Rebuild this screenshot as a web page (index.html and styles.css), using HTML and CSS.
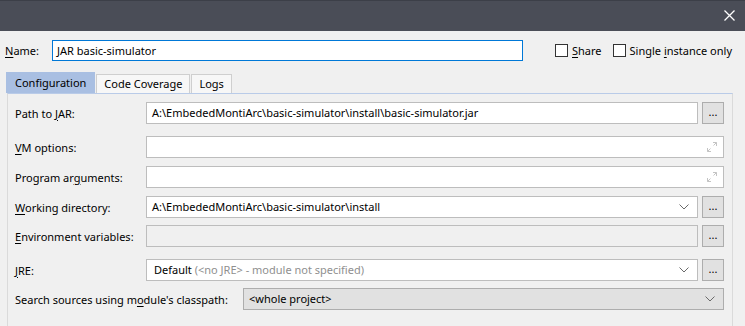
FILE: index.html
```html
<!DOCTYPE html>
<html lang="en">
<head>
  <meta charset="UTF-8">
  <title>Run Configuration</title>
  <link rel="stylesheet" href="styles.css">
</head>
<body>
  <div class="titlebar">
    <svg class="close" width="11" height="11" viewBox="0 0 11 11">
      <path d="M0.5 0.5 L10.5 10.5 M10.5 0.5 L0.5 10.5" stroke="#fff" stroke-width="1.3" fill="none"/>
    </svg>
  </div>

  <div class="name-row">
    <div class="name-label"><u>N</u>ame:</div>
    <div class="name-input">JAR basic-simulator</div>
    <div class="check share"><span class="box"></span><span><u>S</u>hare</span></div>
    <div class="check single"><span class="box"></span><span>Single <u>i</u>nstance only</span></div>
  </div>

  <div class="tabs">
    <div class="tab active">Configuration</div>
    <div class="tab">Code Coverage</div>
    <div class="tab">Logs</div>
  </div>

  <div class="panel">
    <div class="row row-jar">
      <div class="label">Path to <u>J</u>AR:</div>
      <div class="field">A:\EmbededMontiArc\basic-simulator\install\basic-simulator.jar</div>
      <div class="btn">...</div>
    </div>
    <div class="row row-vm">
      <div class="label"><u>V</u>M options:</div>
      <div class="field expand">
        <svg class="expand-icon" width="10" height="10" viewBox="0 0 10 10">
          <path d="M6 0.5 H9.5 V4 M9.5 0.5 L6.5 3.5 M0.5 6 V9.5 H4 M0.5 9.5 L3.5 6.5" stroke="#c4c4c4" fill="none"/>
        </svg>
      </div>
    </div>
    <div class="row row-args">
      <div class="label">Program ar<u>g</u>uments:</div>
      <div class="field expand">
        <svg class="expand-icon" width="10" height="10" viewBox="0 0 10 10">
          <path d="M6 0.5 H9.5 V4 M9.5 0.5 L6.5 3.5 M0.5 6 V9.5 H4 M0.5 9.5 L3.5 6.5" stroke="#c4c4c4" fill="none"/>
        </svg>
      </div>
    </div>
    <div class="row row-dir">
      <div class="label"><u>W</u>orking directory:</div>
      <div class="field combo">
        <span>A:\EmbededMontiArc\basic-simulator\install</span>
        <svg class="chevron" width="10" height="6" viewBox="0 0 10 6"><path d="M0.5 0.5 L5 5 L9.5 0.5" stroke="#6a6a6a" fill="none"/></svg>
      </div>
      <div class="btn">...</div>
    </div>
    <div class="row row-env">
      <div class="label"><u>E</u>nvironment variables:</div>
      <div class="field disabled"></div>
      <div class="btn">...</div>
    </div>
    <div class="row row-jre">
      <div class="label"><u>J</u>RE:</div>
      <div class="field combo jre">
        <span>Default <span class="muted">(&lt;no JRE&gt; - module not specified)</span></span>
        <svg class="chevron" width="10" height="6" viewBox="0 0 10 6"><path d="M0.5 0.5 L5 5 L9.5 0.5" stroke="#6a6a6a" fill="none"/></svg>
      </div>
      <div class="btn">...</div>
    </div>
    <div class="row row-src">
      <div class="label wide">Search sources using m<u>o</u>dule's classpath:</div>
      <div class="field combo grey">
        <span>&lt;whole project&gt;</span>
        <svg class="chevron" width="10" height="6" viewBox="0 0 10 6"><path d="M0.5 0.5 L5 5 L9.5 0.5" stroke="#6a6a6a" fill="none"/></svg>
      </div>
    </div>
  </div>
</body>
</html>
```

FILE: styles.css
```css
body {
  margin: 0;
  height: 326px;
  overflow: hidden;
  background: #f0f0f0;
  font-family: 'Noto Sans', sans-serif;
  font-size: 11px;
  color: #000;
}
u {
  text-underline-offset: 2px;
}
.titlebar {
  height: 31px;
  box-sizing: border-box;
  background: #4a4d57;
  border-top: 1px solid #3c3f48;
  display: flex;
  justify-content: flex-end;
  padding: 9px 10px 0 0;
}
.name-row {
  display: flex;
  align-items: center;
  height: 21px;
  margin-top: 9px;
  padding-left: 5px;
}
.name-label {
  width: 47px;
}
.name-input {
  width: 471px;
  height: 21px;
  box-sizing: border-box;
  border: 1px solid #0078d7;
  background: #fff;
  padding-left: 4px;
  line-height: 19px;
}
.check {
  display: flex;
  align-items: center;
  white-space: nowrap;
}
.share {
  margin-left: 32px;
}
.single {
  margin-left: 11px;
}
.box {
  width: 13px;
  height: 13px;
  box-sizing: border-box;
  border: 1px solid #333;
  background: #fff;
  margin-right: 4px;
}
.tabs {
  display: flex;
  align-items: flex-end;
  height: 21px;
  margin: 11px 0 0 6px;
}
.tab {
  height: 19px;
  box-sizing: border-box;
  border: 1px solid #cfcfcf;
  border-bottom: none;
  background: #f7f7f7;
  padding: 0 7px;
  margin-left: 1px;
  line-height: 18px;
}
.tab.active {
  height: 21px;
  margin-left: 0;
  background: #a9bfe2;
  border-color: #a9bfe2;
  padding: 0 8px;
  line-height: 20px;
}
.panel {
  margin-left: 7px;
  width: 726px;
  height: 240px;
  box-sizing: border-box;
  border-top: 1px solid #b9cbe8;
  border-left: 1px solid #dadada;
  border-right: 1px solid #dadada;
  padding-top: 8px;
}
.row {
  display: flex;
  align-items: center;
  height: 22px;
  padding: 0 8px 0 7px;
}
.row-vm {
  margin-top: 12px;
}
.row-args,
.row-dir {
  margin-top: 8px;
}
.row-env,
.row-src {
  margin-top: 7px;
}
.row-jre {
  margin-top: 12px;
}
.label {
  width: 131px;
  flex: none;
  white-space: nowrap;
}
.label.wide {
  width: 228px;
}
.field {
  flex: 1;
  height: 22px;
  box-sizing: border-box;
  border: 1px solid #bdbdbd;
  background: #fff;
  padding-left: 5px;
  line-height: 20px;
  display: flex;
  align-items: center;
  position: relative;
  white-space: nowrap;
}
.field.disabled {
  background: #f0f0f0;
}
.field.combo {
  justify-content: space-between;
  padding-right: 8px;
}
.field.jre {
  padding-left: 7px;
}
.field.grey {
  background: #e1e1e1;
  border-color: #adadad;
}
.muted {
  color: #8f8f8f;
}
.expand-icon {
  position: absolute;
  right: 6px;
  top: 5px;
}
.btn {
  width: 22px;
  height: 22px;
  flex: none;
  box-sizing: border-box;
  margin-left: 4px;
  border: 1px solid #adadad;
  background: #e1e1e1;
  text-align: center;
  line-height: 18px;
  font-size: 11px;
}
```
